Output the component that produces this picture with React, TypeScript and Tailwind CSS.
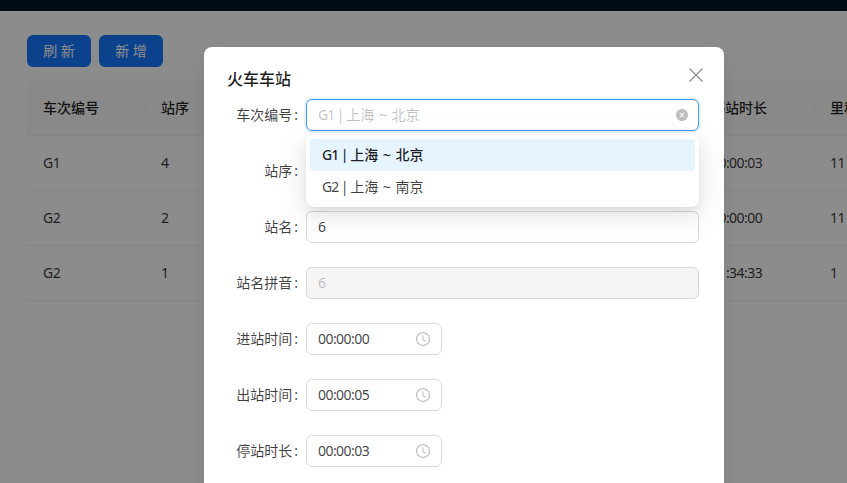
const font = 'font-["Noto_Sans","Noto_Sans_CJK_SC",sans-serif]';

function ClockIcon() {
  return (
    <svg viewBox="64 64 896 896" className="w-[14px] h-[14px] fill-black/25 shrink-0">
      <path d="M512 64C264.6 64 64 264.6 64 512s200.6 448 448 448 448-200.6 448-448S759.4 64 512 64zm0 820c-205.4 0-372-166.6-372-372s166.6-372 372-372 372 166.6 372 372-166.6 372-372 372z" />
      <path d="M686.7 638.6L544.1 535.5V288c0-4.4-3.6-8-8-8H488c-4.4 0-8 3.6-8 8v275.4c0 2.6 1.2 5 3.3 6.5l165.4 120.6c3.6 2.6 8.6 1.8 11.2-1.7l28.6-39c2.6-3.7 1.8-8.7-1.8-11.2z" />
    </svg>
  );
}

function ClearIcon() {
  return (
    <svg viewBox="64 64 896 896" className="w-3 h-3 fill-black/25 shrink-0">
      <path d="M512 64C264.6 64 64 264.6 64 512s200.6 448 448 448 448-200.6 448-448S759.4 64 512 64zm165.4 618.2l-66-.3L512 563.4l-99.3 118.4-66.1.3c-4.4 0-8-3.5-8-8 0-1.9.7-3.7 1.9-5.2l130.1-155L340.5 359a8.32 8.32 0 0 1-1.9-5.2c0-4.4 3.6-8 8-8l66.1.3L512 464.6l99.3-118.4 66-.3c4.4 0 8 3.5 8 8 0 1.9-.7 3.7-1.9 5.2L553.5 514l130 155c1.2 1.5 1.9 3.3 1.9 5.2 0 4.4-3.6 8-8 8z" />
    </svg>
  );
}

function Row({ label, children }: { label: string; children: React.ReactNode }) {
  return (
    <div className="flex items-center h-8 mb-6">
      <div className="w-20 shrink-0 flex justify-end text-sm text-black/75 pr-2 whitespace-nowrap">
        <span>{label}</span>
        <span className="ml-[2px]">:</span>
      </div>
      {children}
    </div>
  );
}

function TimeInput({ value }: { value: string }) {
  return (
    <div className="w-[136px] h-8 rounded-md border border-[#d9d9d9] pl-[11px] pr-[11px] flex items-center justify-between text-sm text-black/75">
      <span className="tracking-[-0.55px]">{value}</span>
      <ClockIcon />
    </div>
  );
}

// train label, the latin part of the font runs wider than the reference's
function Route({ code, to }: { code: string; to: string }) {
  return (
    <span className="whitespace-pre">
      <span className="tracking-[-1px]">{code} | </span>上海 <span className="mx-[1px]">~</span> {to}
    </span>
  );
}

const rows = [
  { code: 'G1', index: '4', stop: '00:00:03', km: '11' },
  { code: 'G2', index: '2', stop: '00:00:00', km: '11' },
  { code: 'G2', index: '1', stop: '01:34:33', km: '1' },
];

export default function App() {
  return (
    <div className={`relative h-[483px] overflow-hidden bg-white ${font}`}>
      <div className="h-[11px] bg-[#001529]" />
      <div className="pl-[27px] pt-6">
        <div className="flex gap-2 mb-[14px]">
          <button className="w-16 h-8 rounded-md bg-[#1677ff] text-white text-sm">刷 新</button>
          <button className="w-16 h-8 rounded-md bg-[#1677ff] text-white text-sm">新 增</button>
        </div>
        <div className="text-sm text-black/80">
          <div className="grid grid-cols-[119px_549px_120px_1fr] h-[55px] items-center bg-[#fafafa] border-b border-[#f0f0f0] font-medium whitespace-nowrap text-black/88">
            <div className="pl-4 h-[22px] leading-[22px] border-r border-[#f0f0f0]">车次编号</div>
            <div className="pl-[15px]">站序</div>
            <div className="pl-4 h-[22px] leading-[22px] border-r border-[#f0f0f0]">停站时长</div>
            <div className="pl-[15px]">里程</div>
          </div>
          {rows.map((r, i) => (
            <div key={i} className="grid grid-cols-[119px_549px_120px_1fr] h-[55px] items-center border-b border-[#f0f0f0] tracking-[-0.55px]">
              <div className="pl-4">{r.code}</div>
              <div className="pl-[15px]">{r.index}</div>
              <div className="pl-4">{r.stop}</div>
              <div className="pl-[15px]">{r.km}</div>
            </div>
          ))}
        </div>
      </div>

      {/* mask + modal */}
      <div className="absolute inset-0 bg-black/45" />
      <div className="absolute left-[204px] top-[47px] w-[520px] h-[560px] bg-white rounded-lg px-6 pt-5 shadow-[0_6px_16px_rgba(0,0,0,0.08)]">
        <div className="text-base font-medium leading-6 text-black/88 mb-2 -ml-px">火车车站</div>
        <svg viewBox="0 0 16 16" className="absolute right-[20px] top-[20px] w-4 h-4 stroke-black/45" fill="none" strokeWidth="1.2">
          <path d="M1.5 1.5L14.5 14.5M14.5 1.5L1.5 14.5" />
        </svg>

        <div className="-ml-[2px] w-[473px]">
          <div className="relative">
            <Row label="车次编号">
              <div className="flex-1 h-8 rounded-md border border-[#4096ff] ring-2 ring-[#0591ff]/10 pl-[11px] pr-[10px] flex items-center justify-between text-sm text-black/25">
                <Route code="G1" to="北京" />
                <ClearIcon />
              </div>
            </Row>
            <div className="absolute left-20 top-9 w-[393px] h-[72px] z-10 bg-white rounded-lg p-1 text-sm text-black/75 shadow-[0_6px_16px_rgba(0,0,0,0.08),0_3px_6px_-4px_rgba(0,0,0,0.12),0_9px_28px_8px_rgba(0,0,0,0.05)]">
              <div className="h-8 rounded bg-[#e6f4ff] px-3 flex items-center font-medium text-black/88"><Route code="G1" to="北京" /></div>
              <div className="h-8 rounded px-3 flex items-center"><Route code="G2" to="南京" /></div>
            </div>
          </div>
          <Row label="站序">
            <div className="flex-1 h-8 rounded-md border border-[#d9d9d9]" />
          </Row>
          <Row label="站名">
            <div className="flex-1 h-8 rounded-md border border-[#d9d9d9] pl-[11px] flex items-center text-sm text-black/75">6</div>
          </Row>
          <Row label="站名拼音">
            <div className="flex-1 h-8 rounded-md border border-[#d9d9d9] bg-black/4 pl-[11px] flex items-center text-sm text-black/25">6</div>
          </Row>
          <Row label="进站时间"><TimeInput value="00:00:00" /></Row>
          <Row label="出站时间"><TimeInput value="00:00:05" /></Row>
          <Row label="停站时长"><TimeInput value="00:00:03" /></Row>
        </div>
      </div>
    </div>
  );
}
